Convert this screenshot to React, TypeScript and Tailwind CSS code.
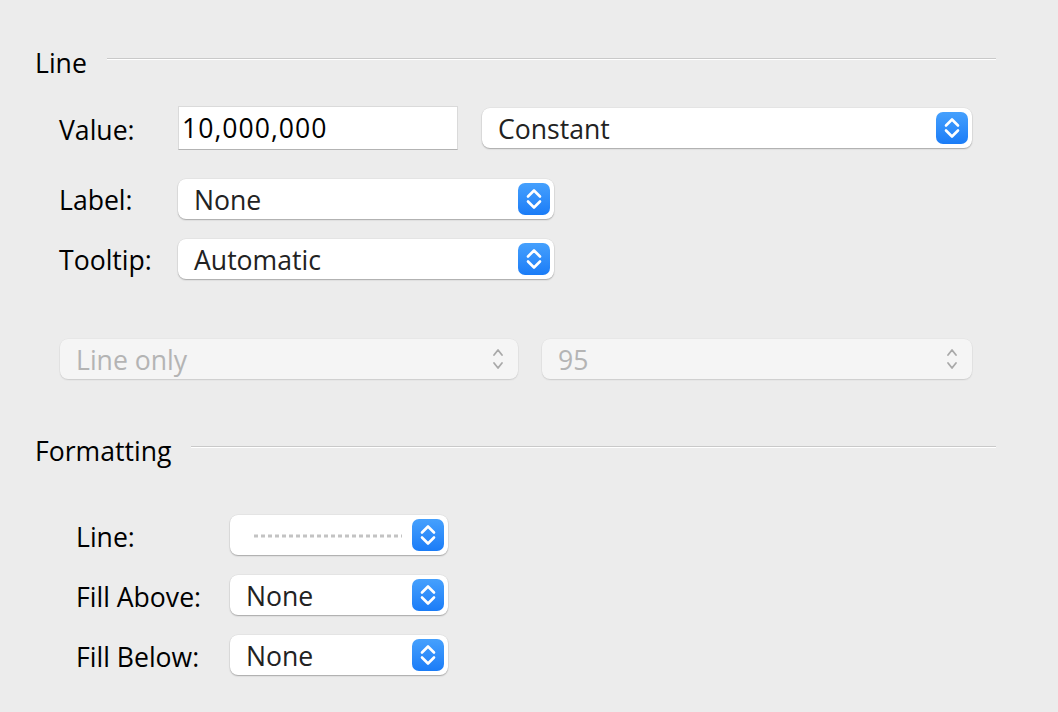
import React from 'react';

function Stepper() {
    return (
        <div className="flex h-[32px] w-[32px] shrink-0 items-center justify-center rounded-[7px] bg-gradient-to-b from-[#45a0fd] to-[#1a7cf7]">
            <svg width="30" height="32" viewBox="0 0 30 32" fill="none">
                <path d="M9 13.5 L15 7.5 L21 13.5" stroke="white" strokeWidth="2.6" strokeLinecap="round" strokeLinejoin="round" />
                <path d="M9 18.5 L15 24.5 L21 18.5" stroke="white" strokeWidth="2.6" strokeLinecap="round" strokeLinejoin="round" />
            </svg>
        </div>
    );
}

function Select({ width, children }: { width: string; children: React.ReactNode }) {
    return (
        <div
            className={`flex h-[40px] ${width} shrink-0 items-center justify-between rounded-[8px] bg-white pl-[16px] pr-[4px] shadow-[0_1px_1.5px_rgba(0,0,0,0.28),0_0_0_0.5px_rgba(0,0,0,0.06)]`}
        >
            <div className="flex-1 pt-[2px] text-[#222]">{children}</div>
            <Stepper />
        </div>
    );
}

function DisabledSelect({ width, value }: { width: string; value: string }) {
    return (
        <div
            className={`flex h-[40px] ${width} items-center justify-between rounded-[8px] bg-[#f5f5f5] pl-[16px] pr-[14px] text-[#b4b4b4] shadow-[0_1px_1.5px_rgba(0,0,0,0.12),0_0_0_0.5px_rgba(0,0,0,0.04)]`}
        >
            <span className="pt-[2px]">{value}</span>
            <svg width="12" height="26" viewBox="0 0 12 26" fill="none">
                <path d="M2 9 L6 4 L10 9" stroke="#a9a9a9" strokeWidth="1.8" strokeLinecap="round" strokeLinejoin="round" />
                <path d="M2 17 L6 22 L10 17" stroke="#a9a9a9" strokeWidth="1.8" strokeLinecap="round" strokeLinejoin="round" />
            </svg>
        </div>
    );
}

function Heading({ title }: { title: string }) {
    return (
        <div className="flex h-[30px] items-center gap-[20px]">
            <span className="text-black">{title}</span>
            <div className="mb-[9px] flex-1 border-t border-b border-t-[#c9c9c9] border-b-white" />
        </div>
    );
}

export default function App() {
    return (
        <div
            className="min-h-screen bg-[#ececec] pl-[35px] pr-[62px] pt-[48px] pb-[36px] text-[26.6px] leading-[30px] text-black"
            style={{ fontFamily: '"Open Sans", "Noto Sans", sans-serif' }}
        >
            <Heading title="Line" />

            <div className="pl-[24px] pr-[24px]">
                <div className="mt-[28px] flex items-center">
                    <span className="w-[119px] shrink-0 pt-[3px]">Value:</span>
                    <div className="flex h-[44px] w-[280px] shrink-0 items-center border border-[#dadada] border-b-[#b3b3b3] bg-white pl-[3px] tracking-[1px]">
                        10,000,000
                    </div>
                    <div className="ml-[24px] flex flex-1">
                        <Select width="w-full">Constant</Select>
                    </div>
                </div>

                <div className="mt-[29px] flex items-center">
                    <span className="w-[119px] shrink-0 pt-[2px]">Label:</span>
                    <Select width="w-[376px]">None</Select>
                </div>

                <div className="mt-[20px] flex items-center">
                    <span className="w-[119px] shrink-0 pt-[2px]">Tooltip:</span>
                    <Select width="w-[376px]">Automatic</Select>
                </div>

                <div className="mt-[60px] flex items-center gap-[24px] pl-[1px]">
                    <DisabledSelect width="w-[458px]" value="Line only" />
                    <DisabledSelect width="flex-1" value="95" />
                </div>
            </div>

            <div className="mt-[57px]">
                <Heading title="Formatting" />
            </div>

            <div className="pl-[41px]">
                <div className="mt-[49px] flex items-center">
                    <span className="w-[154px] shrink-0 pt-[3px]">Line:</span>
                    <Select width="w-[218px]">
                        <svg width="148" height="6" viewBox="0 0 148 6" className="ml-[8px] block">
                            <line x1="0" y1="3" x2="148" y2="3" stroke="#c3c3c3" strokeWidth="3" strokeDasharray="4 3" />
                        </svg>
                    </Select>
                </div>

                <div className="mt-[20px] flex items-center">
                    <span className="w-[154px] shrink-0 pt-[3px]">Fill Above:</span>
                    <Select width="w-[218px]">None</Select>
                </div>

                <div className="mt-[20px] flex items-center">
                    <span className="w-[154px] shrink-0 pt-[3px]">Fill Below:</span>
                    <Select width="w-[218px]">None</Select>
                </div>
            </div>
        </div>
    );
}
